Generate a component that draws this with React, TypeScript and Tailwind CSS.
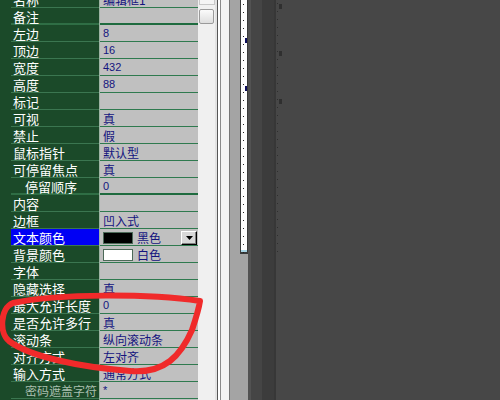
import React from 'react';

type Row = {
  name: string;
  value: string;
  indent?: boolean;
  thick?: boolean;
  dim?: boolean;
  selected?: boolean;
  swatch?: 'black' | 'white';
  digits?: boolean;
};

const rows: Row[] = [
  { name: '名称', value: '编辑框1' },
  { name: '备注', value: '', thick: true },
  { name: '左边', value: '8', digits: true },
  { name: '顶边', value: '16', digits: true },
  { name: '宽度', value: '432', digits: true },
  { name: '高度', value: '88', digits: true },
  { name: '标记', value: '' },
  { name: '可视', value: '真' },
  { name: '禁止', value: '假' },
  { name: '鼠标指针', value: '默认型' },
  { name: '可停留焦点', value: '真' },
  { name: '停留顺序', value: '0', indent: true, thick: true, digits: true },
  { name: '内容', value: '' },
  { name: '边框', value: '凹入式' },
  { name: '文本颜色', value: '黑色', swatch: 'black', selected: true },
  { name: '背景颜色', value: '白色', swatch: 'white' },
  { name: '字体', value: '' },
  { name: '隐藏选择', value: '真' },
  { name: '最大允许长度', value: '0', digits: true },
  { name: '是否允许多行', value: '真' },
  { name: '滚动条', value: '纵向滚动条' },
  { name: '对齐方式', value: '左对齐' },
  { name: '输入方式', value: '通常方式' },
  { name: '密码遮盖字符', value: '*', indent: true, dim: true, digits: true },
  { name: '', value: '' },
];

const cjk = "font-['Noto_Sans_CJK_SC',sans-serif]";
const latin = "font-['Liberation_Sans',sans-serif]";

const PropRow: React.FC<{ row: Row }> = ({ row }) => (
  <div className="flex h-[17px] shrink-0">
    <div
      className={`flex w-[88px] items-center whitespace-nowrap pt-[1px] leading-none ${cjk} ${
        row.indent ? (row.dim ? 'pl-[14px] text-[12px]' : 'pl-[14px] text-[13px]') : 'pl-[2px] text-[13px]'
      } ${row.selected ? 'bg-[#0000f4]' : ''} ${
        row.thick ? 'border-b-2 border-[#2f6e45]' : 'border-b border-[#3b7650]'
      } ${row.dim ? 'text-[#a9bfae]' : 'text-white'}`}
    >
      {row.name}
    </div>
    <div className="w-px bg-[#9db3a3]" />
    <div
      className={`flex flex-1 items-center gap-[4px] bg-[#c0c0c0] pl-[3px] pt-[1px] text-[#14147e] ${
        row.thick ? 'border-b-2 border-[#1f6b3f]' : 'border-b border-[#2f7a4f]'
      }`}
    >
      {row.swatch && (
        <div
          className={`h-[12px] w-[30px] border border-[#4c6a58] ${row.swatch === 'black' ? 'bg-black' : 'bg-white'}`}
        />
      )}
      <span
        className={`whitespace-nowrap ${row.digits ? `text-[11px] leading-none ${latin}` : `text-[12px] leading-none ${cjk}`}`}
      >
        {row.value}
      </span>
      {row.selected && (
        <div className="ml-auto mr-px flex h-[14px] w-[16px] items-center justify-center border border-black border-t-white border-l-white bg-[#d8d8d8] shadow-[inset_-1px_-1px_0_#808080]">
          <svg width="7" height="4" viewBox="0 0 7 4">
            <path d="M0 0 H7 L3.5 4 Z" fill="#000" />
          </svg>
        </div>
      )}
    </div>
  </div>
);

export default function App() {
  const dots = Array.from({ length: 32 });
  return (
    <div className="relative flex h-[400px] w-[500px] overflow-hidden bg-[#474747]">
      {/* property grid */}
      <div className="flex w-[198px] shrink-0 bg-[#1b4a29]">
        <div className="w-[11px] shrink-0" />
        <div className="mt-[-9px] flex flex-1 flex-col">
          {rows.map((r, i) => (
            <PropRow key={i} row={r} />
          ))}
        </div>
      </div>

      {/* scrollbar */}
      <div className="flex w-[17px] shrink-0 flex-col items-center bg-[#f0f0f0]">
        <div className="mt-[-12px] flex h-[17px] w-[16px] items-end justify-center border border-[#c8c8c8] bg-[#f4f4f4] pb-[4px]">
          <svg width="7" height="4" viewBox="0 0 7 4">
            <path d="M0 4 L3.5 0 L7 4 Z" fill="#404040" />
          </svg>
        </div>
        <div className="mt-[4px] h-[15px] w-[15px] rounded-[2px] border border-[#9a9a9a] bg-gradient-to-b from-[#fbfbfb] to-[#dedede]" />
      </div>

      {/* separators */}
      <div className="w-[2px] shrink-0 bg-[#e2e2e2]" />
      <div className="w-px shrink-0 bg-[#555555]" />
      <div className="w-[2px] shrink-0 bg-white" />
      <div className="w-px shrink-0 bg-[#8a8a8a]" />
      <div className="w-[8px] shrink-0 bg-[#f3f3f3]" />
      <div className="w-px shrink-0 bg-[#767676]" />
      <div className="w-[10px] shrink-0 bg-[#a4a4a4]" />

      {/* design canvas edge */}
      <div className="flex w-[8px] shrink-0 flex-col bg-[#a4a4a4]">
        <div className="relative h-[254px] border-x border-b-2 border-[#3a3a3a] bg-white shadow-[inset_0_-2px_0_#a9d6e6]">
          <div className="flex flex-col gap-[7px] pl-[2px] pt-[4px]">
            {dots.map((_, i) => (
              <div key={i} className="h-px w-px bg-[#222222]" />
            ))}
          </div>
          <div className="absolute right-0 top-[38px] h-[5px] w-[2px] bg-[#0e0e5c]" />
          <div className="absolute right-0 top-[86px] h-[5px] w-[2px] bg-[#0e0e5c]" />
        </div>
      </div>

      {/* dark workspace */}
      <div className="w-[3px] shrink-0 bg-[#525252]" />
      <div className="w-[11px] shrink-0 bg-[#454545]" />
      <div className="w-[12px] shrink-0 bg-[#3c3c3c]" />
      <div className="w-[2px] shrink-0 bg-[#373737]" />
      <div className="relative flex-1">
        <div className="flex flex-col gap-[7px] pl-px pt-[3px]">
          {dots.map((_, i) => (
            <div key={i} className="h-px w-px bg-[#2e2e2e]" />
          ))}
        </div>
        <div className="absolute left-[3px] top-[4px] h-[5px] w-[3px] bg-[#2f2f2f]" />
        <div className="absolute left-[3px] top-[51px] h-[5px] w-[3px] bg-[#2f2f2f]" />
        <div className="absolute left-[3px] top-[99px] h-[5px] w-[3px] bg-[#2f2f2f]" />
      </div>

      {/* red hand-drawn annotation */}
      <svg className="pointer-events-none absolute left-0 top-0" width="500" height="400" viewBox="0 0 500 400">
        <path
          d="M200 301 C150 294 60 293 13 303 C0 308 -1 333 9 341 C30 357 80 367 130 371 C165 374 181 355 192 330 C196 318 199 308 200 301"
          fill="none"
          stroke="#f02a2a"
          strokeWidth="6"
          strokeLinecap="round"
          strokeLinejoin="round"
        />
      </svg>
    </div>
  );
}
